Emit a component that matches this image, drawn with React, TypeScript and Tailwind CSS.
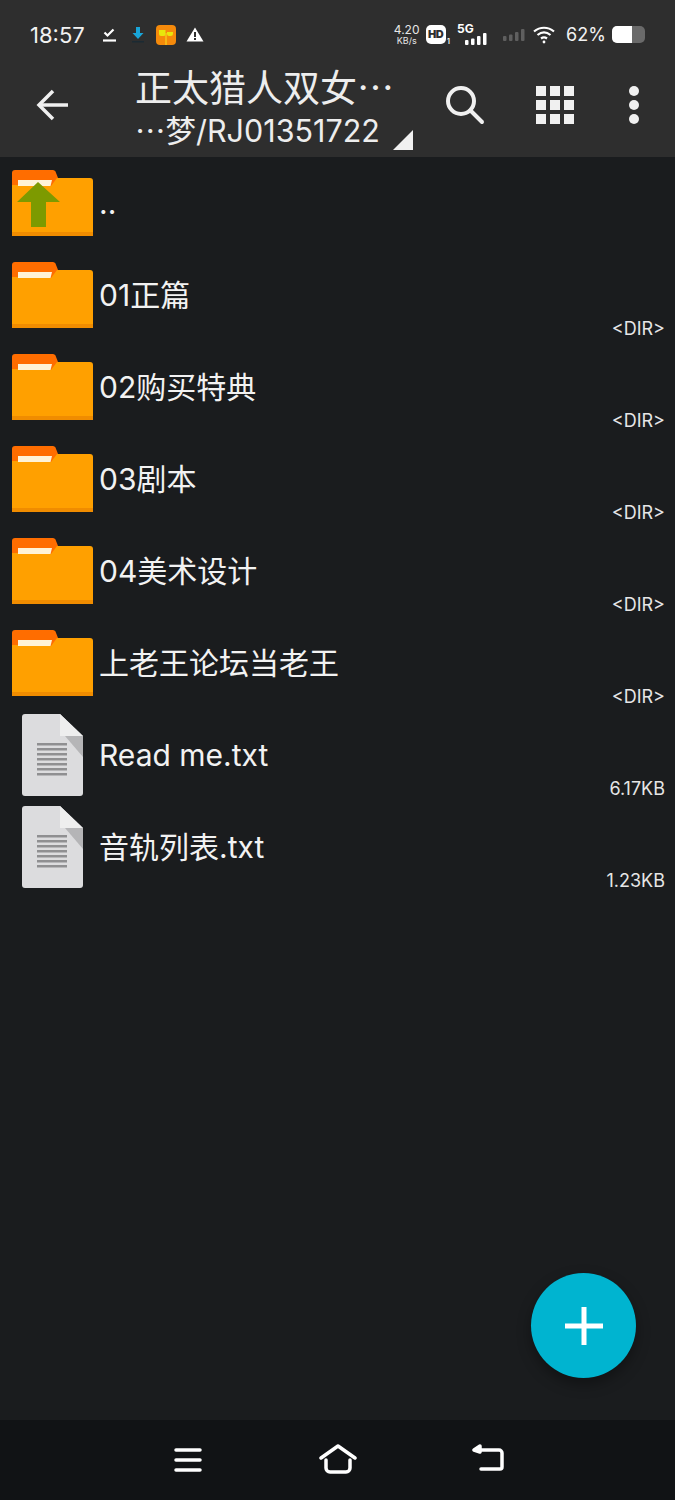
import React from 'react';

interface Entry {
  name: string;
  size: string;
  kind: 'folder' | 'file';
}

const entries: Entry[] = [
  { name: '01正篇', size: '<DIR>', kind: 'folder' },
  { name: '02购买特典', size: '<DIR>', kind: 'folder' },
  { name: '03剧本', size: '<DIR>', kind: 'folder' },
  { name: '04美术设计', size: '<DIR>', kind: 'folder' },
  { name: '上老王论坛当老王', size: '<DIR>', kind: 'folder' },
  { name: 'Read me.txt', size: '6.17KB', kind: 'file' },
  { name: '音轨列表.txt', size: '1.23KB', kind: 'file' },
];

const fontClass = "font-['Inter','Noto_Sans_CJK_SC',sans-serif]";
const cjkClass = "font-['Noto_Sans_CJK_SC',sans-serif]";

const FolderIcon = ({ up = false }: { up?: boolean }) => (
  <svg width="81" height="66" viewBox="0 0 81 66" className="shrink-0">
    <path d="M0 3a3 3 0 0 1 3-3h38a3 3 0 0 1 2.500 1.500L46 8v12H0z" fill="#ff6d00" />
    <path d="M6 10h34l-1.500 6H6z" fill="#fff3d6" />
    <path d="M0 66V15h6v1h33l6-8h33a3 3 0 0 1 3 3v55z" fill="#ffa000" />
    <rect x="0" y="62" width="81" height="4" fill="#f08c00" />
    {up && <path d="M26 12 5 32h14v25h15V32h14z" fill="#7d9a00" />}
  </svg>
);

const FileIcon = () => (
  <svg width="61" height="82" viewBox="0 0 61 82" className="shrink-0">
    <path d="M3 0h35l23 22v57a3 3 0 0 1-3 3H3a3 3 0 0 1-3-3V3a3 3 0 0 1 3-3z" fill="#dcdcde" />
    <path d="M38 0l23 22H38z" fill="#eeeeee" />
    <path d="M43 22h18v21z" fill="#b5b5b7" />
    <g fill="#8f8f91">
      <rect x="15" y="29" width="30" height="2.500" />
      <rect x="15" y="34" width="30" height="2.500" />
      <rect x="15" y="39" width="30" height="2.500" />
      <rect x="15" y="44" width="30" height="2.500" />
      <rect x="15" y="49" width="30" height="2.500" />
      <rect x="15" y="54" width="30" height="2.500" />
      <rect x="15" y="59" width="30" height="2.500" />
    </g>
  </svg>
);

const SignalBars = ({ dim = false }: { dim?: boolean }) => (
  <svg width="22" height="12" viewBox="0 0 22 12" fill={dim ? '#5f5f5f' : '#ffffff'}>
    <rect x="0" y="7" width="3.500" height="5" rx="1" />
    <rect x="6" y="5.500" width="3.500" height="6.500" rx="1" />
    <rect x="12" y="3" width="3.500" height="9" rx="1" />
    <rect x="18" y="0" width="3.500" height="12" rx="1" />
  </svg>
);

const StatusBar = () => (
  <div className="flex h-[68px] items-center pt-[1px] pr-[30px] pl-[30px] text-white">
    <span className="w-[57px] text-[22px] leading-none whitespace-nowrap text-[#f2f2f2]">18:57</span>
    <svg width="15" height="15" viewBox="0 0 15 15" className="ml-[15px]" fill="none" stroke="#ffffff" strokeWidth="2.200">
      <path d="M2.500 5.500l3 3 6-6" />
      <path d="M1 13.500h13" />
    </svg>
    <svg width="12" height="16" viewBox="0 0 12 16" className="ml-[15px]">
      <path d="M4 0h4v6h3.500L6 12 .500 6H4z" fill="#19a5d8" />
      <rect x="0" y="14" width="12" height="1.500" fill="#1b2a33" />
    </svg>
    <svg width="20" height="20" viewBox="0 0 20 20" className="ml-[12px]">
      <rect width="20" height="20" rx="4" fill="#f58a0b" />
      <path d="M3 5h6.500v4.500a2 2 0 0 1-2 1.500H5a2 2 0 0 1-2-2zM11 7h6v1.500A2.500 2.500 0 0 1 14.500 11H13a2 2 0 0 1-2-2z" fill="#e8e60c" />
      <rect x="9.300" y="8" width="1.400" height="12" fill="#f7c91a" />
    </svg>
    <svg width="18" height="15" viewBox="0 0 18 15" className="ml-[10px]">
      <path d="M9 .500l8.500 14H.500z" fill="#ffffff" />
      <rect x="8" y="5" width="2" height="5" fill="#2e2e2e" />
      <rect x="8" y="11" width="2" height="2" fill="#2e2e2e" />
    </svg>

    <div className="ml-auto flex items-center">
      <div className="flex w-[26px] flex-col items-center text-[#e6e6e6]">
        <span className="text-[12px] leading-[12px]">4.20</span>
        <span className="text-[9px] leading-[9px]">KB/s</span>
      </div>
      <div className="ml-[6px] flex h-[19px] w-[20px] items-center justify-center rounded-[5px] bg-white text-[11px] leading-none font-black tracking-[-0.5px] text-[#2e2e2e]">
        HD
      </div>
      <span className="mt-[12px] ml-[1px] text-[8px] leading-none font-medium">1</span>
      <div className="relative ml-[7px] h-[20px] w-[30px]">
        <span className="absolute top-[-2px] left-0 text-[12px] leading-none font-bold">5G</span>
        <div className="absolute right-0 bottom-[0px] flex">
          <SignalBars />
        </div>
      </div>
      <div className="ml-[16px] flex">
        <SignalBars dim />
      </div>
      <svg width="22" height="18" viewBox="0 0 22 18" className="ml-[8px]" fill="none" stroke="#ffffff" strokeWidth="2.200">
        <path d="M1 5.500c6-5 14-5 20 0" />
        <path d="M4.500 9c4-3.300 9-3.300 13 0" />
        <path d="M8 12.500c2-1.500 4-1.500 6 0" />
        <circle cx="11" cy="16" r="1.400" fill="#ffffff" stroke="none" />
      </svg>
      <span className="ml-[11px] w-[39px] text-[18px] leading-none whitespace-nowrap text-[#f2f2f2]">62%</span>
      <div className="ml-[7px] flex h-[17px] w-[33px] overflow-hidden rounded-[5px] bg-[#6a6a6a]">
        <div className="h-full w-[20px] bg-white" />
      </div>
    </div>
  </div>
);

const Toolbar = () => (
  <div className="relative flex h-[89px] items-start">
    <svg width="34" height="32" viewBox="0 0 34 32" className="mt-[21px] ml-[36px] shrink-0" fill="none" stroke="#f0f0f0" strokeWidth="3.500">
      <path d="M32 16H3" />
      <path d="M17 2 3 16l14 14" />
    </svg>
    <div className="-mt-[2px] ml-[65px] flex w-[290px] flex-col">
      <span className={`text-[37px] leading-[40px] whitespace-nowrap text-[#ededed] ${cjkClass}`}>正太猎人双女…</span>
      <span className="mt-[3px] text-[30.5px] leading-[40px] whitespace-nowrap text-[#ededed]">
        <span className={cjkClass}>…梦</span>/RJ01351722
      </span>
    </div>
    <svg width="40" height="40" viewBox="0 0 40 40" className="absolute top-[17px] left-[445px]" fill="none" stroke="#f0f0f0" strokeWidth="4">
      <circle cx="16" cy="16" r="13" />
      <path d="M25.500 25.500 37 37" strokeLinecap="round" />
    </svg>
    <svg width="38" height="38" viewBox="0 0 38 38" className="absolute top-[18px] left-[536px]" fill="#f0f0f0">
      <rect x="0" y="0" width="10" height="10" /><rect x="14" y="0" width="10" height="10" /><rect x="28" y="0" width="10" height="10" />
      <rect x="0" y="14" width="10" height="10" /><rect x="14" y="14" width="10" height="10" /><rect x="28" y="14" width="10" height="10" />
      <rect x="0" y="28" width="10" height="10" /><rect x="14" y="28" width="10" height="10" /><rect x="28" y="28" width="10" height="10" />
    </svg>
    <svg width="10" height="38" viewBox="0 0 10 38" className="absolute top-[18px] left-[629px]" fill="#f0f0f0">
      <circle cx="5" cy="5" r="5" /><circle cx="5" cy="19" r="5" /><circle cx="5" cy="33" r="5" />
    </svg>
    <svg width="20" height="20" viewBox="0 0 20 20" className="absolute top-[62px] left-[393px]">
      <path d="M20 0v20H0z" fill="#f0f0f0" />
    </svg>
  </div>
);

const Row = ({ entry }: { entry: Entry }) => (
  <div className="flex h-[92px] items-center">
    <div className={`flex w-[99px] shrink-0 ${entry.kind === 'folder' ? 'pl-[12px]' : 'pl-[22px]'}`}>
      {entry.kind === 'folder' ? <FolderIcon /> : <FileIcon />}
    </div>
    <span className="flex-1 text-[30px] leading-none whitespace-nowrap text-[#f2f2f2]">{entry.name}</span>
    <span className="mt-[68px] mr-[10px] text-[18px] leading-none text-[#e6e6e6]">{entry.size}</span>
  </div>
);

export default function App() {
  return (
    <div className={`relative flex h-[1500px] w-[675px] flex-col overflow-hidden bg-[#1a1c1e] ${fontClass}`}>
      <header className="bg-[#2e2e2e]">
        <StatusBar />
        <Toolbar />
      </header>
      <main className="flex-1">
        <div className="flex h-[92px] items-center">
          <div className="flex w-[99px] shrink-0 pl-[12px]">
            <FolderIcon up />
          </div>
          <span className="text-[30px] leading-none text-[#f2f2f2]">..</span>
        </div>
        {entries.map((entry) => (
          <Row key={entry.name} entry={entry} />
        ))}
      </main>
      <nav className="relative flex h-[80px] items-center bg-[#111315]">
        <svg width="30" height="26" viewBox="0 0 30 26" className="absolute top-[27px] left-[173px]" stroke="#ffffff" strokeWidth="3.500" strokeLinecap="round">
          <path d="M3 3h24M3 13h24M3 23h24" />
        </svg>
        <svg width="38" height="30" viewBox="0 0 38 30" className="absolute top-[24px] left-[319px]" fill="none" stroke="#ffffff" strokeWidth="3.500" strokeLinecap="round" strokeLinejoin="round">
          <path d="M2 14 19 2l17 12" />
          <path d="M7 16v8a4 4 0 0 0 4 4h16a4 4 0 0 0 4-4v-8" />
        </svg>
        <svg width="32" height="28" viewBox="0 0 32 28" className="absolute top-[24px] left-[472px]" fill="none" stroke="#ffffff" strokeWidth="3.500" strokeLinecap="round" strokeLinejoin="round">
          <path d="M8 6h19a3 3 0 0 1 3 3v14a2 2 0 0 1-2 2H9" />
          <path d="M8 2 2 6l6 2z" fill="#ffffff" />
        </svg>
      </nav>
      <button className="absolute top-[1273px] left-[531px] flex h-[105px] w-[105px] items-center justify-center rounded-full bg-[#00b4d0] shadow-[0_6px_14px_rgba(0,0,0,0.35)]">
        <svg width="38" height="38" viewBox="0 0 38 38" stroke="#ffffff" strokeWidth="5">
          <path d="M19 0v38M0 19h38" />
        </svg>
      </button>
    </div>
  );
}
